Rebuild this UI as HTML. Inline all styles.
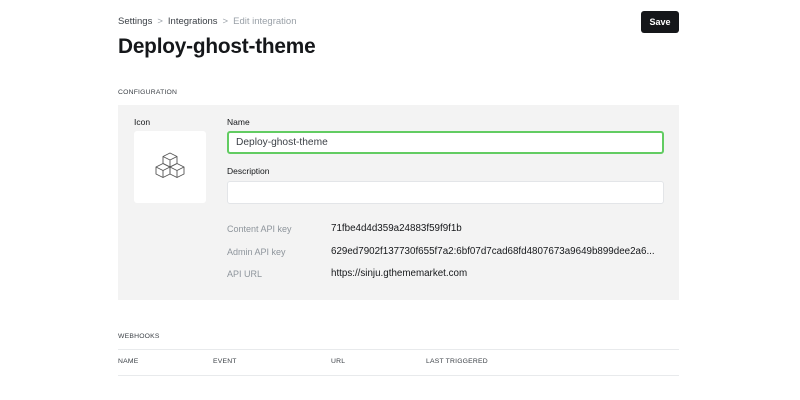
<!DOCTYPE html>
<html><head><style>
*{margin:0;padding:0;box-sizing:border-box}
body{width:800px;height:400px;background:#fff;font-family:"Liberation Sans",sans-serif;color:#15171a;position:relative;overflow:hidden}
.a{position:absolute;white-space:nowrap}
.crumb{left:118px;top:16px;font-size:9.5px;color:#3a3f45}
.crumb .g{color:#9aa1a8}
.crumb .s{color:#9aa1a8;margin:0 5px}
h1{position:absolute;left:118px;top:35px;font-size:20.8px;font-weight:bold;letter-spacing:-0.2px}
.save{left:641px;top:11px;width:38px;height:22px;background:#15171a;border-radius:3px;color:#fff;font-size:9px;font-weight:bold;text-align:center;line-height:22px}
.cap{font-size:6.8px;color:#3a3f45;letter-spacing:0.2px}
.panel{position:absolute;left:118px;top:105px;width:561px;height:195px;background:#f3f3f3}
.lbl{font-size:8.5px;color:#15171a}
.iconbox{position:absolute;left:134px;top:131px;width:72px;height:72px;background:#fff;border-radius:3px}
.inp{position:absolute;left:227px;width:437px;height:23px;background:#fff;border:1px solid #e3e5e8;border-radius:3px;font-size:10.2px;padding-left:7px;line-height:21px;color:#3a3f45}
.inp.f{border:2px solid #62cc62;line-height:19px}
.k{font-size:9px;color:#8e959c;left:227px}
.v{font-size:9.8px;color:#15171a;left:331px}
.line{position:absolute;left:118px;width:561px;height:1px;background:#e8eaec}
</style></head><body>
<div class="a crumb">Settings<span class="s">&gt;</span>Integrations<span class="s">&gt;</span><span class="g">Edit integration</span></div>
<h1>Deploy-ghost-theme</h1>
<div class="a save">Save</div>
<div class="a cap" style="left:118px;top:89px">CONFIGURATION</div>
<div class="panel"></div>
<div class="a lbl" style="left:134px;top:117px">Icon</div>
<div class="iconbox">
<svg width="72" height="72" viewBox="0 0 72 72" fill="none" stroke="#555" stroke-width="0.9" stroke-linejoin="round">
<path d="M36 22l7 3.5v7l-7 3.5-7-3.5v-7z M29 25.5l7 3.5 7-3.5 M36 29v7"/>
<path d="M29 32.5l7 3.5v7l-7 3.5-7-3.5v-7z M22 36l7 3.5 7-3.5 M29 39.5v7"/>
<path d="M43 32.5l7 3.5v7l-7 3.5-7-3.5v-7z M36 36l7 3.5 7-3.5 M43 39.5v7"/>
</svg></div>
<div class="a lbl" style="left:227px;top:117px">Name</div>
<div class="inp f" style="top:131px">Deploy-ghost-theme</div>
<div class="a lbl" style="left:227px;top:166px">Description</div>
<div class="inp" style="top:181px"></div>
<div class="a k" style="top:224px">Content API key</div>
<div class="a v" style="top:223px">71fbe4d4d359a24883f59f9f1b</div>
<div class="a k" style="top:247px">Admin API key</div>
<div class="a v" style="top:246px">629ed7902f137730f655f7a2:6bf07d7cad68fd4807673a9649b899dee2a6...</div>
<div class="a k" style="top:269px">API URL</div>
<div class="a v" style="top:268px">https://sinju.gthememarket.com</div>
<div class="a cap" style="left:118px;top:333px">WEBHOOKS</div>
<div class="line" style="top:349px"></div>
<div class="a cap" style="left:118px;top:358px">NAME</div>
<div class="a cap" style="left:213px;top:358px">EVENT</div>
<div class="a cap" style="left:331px;top:358px">URL</div>
<div class="a cap" style="left:426px;top:358px">LAST TRIGGERED</div>
<div class="line" style="top:375px"></div>
</body></html>
